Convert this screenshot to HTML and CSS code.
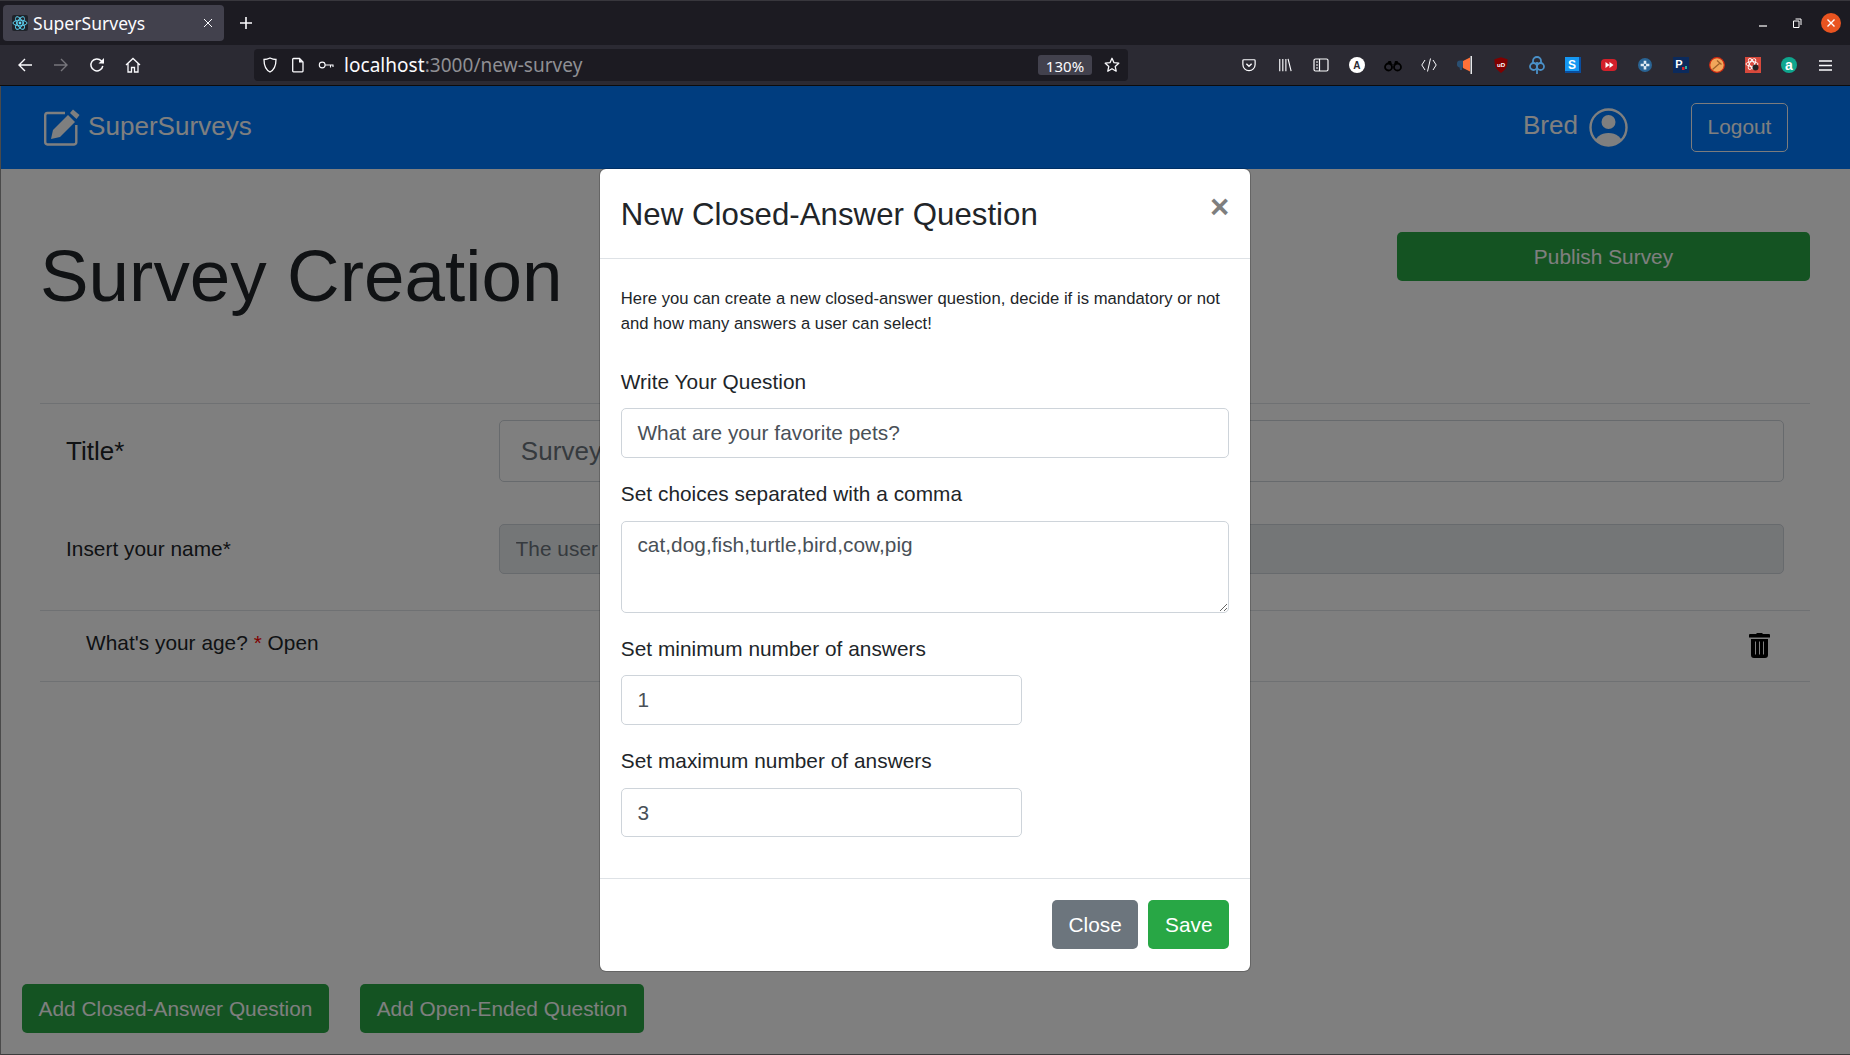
FILE: index.html
```html
<!DOCTYPE html>
<html lang="en">
<head>
    <meta charset="UTF-8">
    <meta name="viewport" content="width=device-width, initial-scale=1.0">
    <title>SuperSurveys</title>
    <link rel="stylesheet" href="styles.css">
</head>
<body>
    <!-- browser window chrome -->
    <div class="tabbar">
        <div class="tab">
            <svg class="favicon" viewBox="0 0 16 16"><rect width="16" height="16" rx="2" fill="#20232a"/><g fill="none" stroke="#61dafb" stroke-width=".9"><ellipse cx="8" cy="8" rx="7" ry="2.8"/><ellipse cx="8" cy="8" rx="7" ry="2.8" transform="rotate(60 8 8)"/><ellipse cx="8" cy="8" rx="7" ry="2.8" transform="rotate(120 8 8)"/></g><circle cx="8" cy="8" r="1.4" fill="#61dafb"/></svg>
            <span class="tab-title">SuperSurveys</span>
            <svg class="tab-close" viewBox="0 0 10 10"><path d="M1 1l8 8M9 1l-8 8" stroke="#fbfbfe" stroke-width="1"/></svg>
        </div>
        <svg class="new-tab" viewBox="0 0 14 14"><path d="M7 1v12M1 7h12" stroke="#fbfbfe" stroke-width="1.6"/></svg>
        <div class="window-controls">
            <span class="win-btn"><svg width="10" height="10" viewBox="0 0 10 10"><path d="M1 8h8" stroke="#fff" stroke-width="1.2"/></svg></span>
            <span class="win-btn"><svg width="10" height="10" viewBox="0 0 10 10"><path d="M1.5 3h5.5v6.5H1.5zM3.5 1h5.500v6" fill="none" stroke="#fff" stroke-width="1"/></svg></span>
            <span class="win-btn win-close"><svg width="10" height="10" viewBox="0 0 10 10"><path d="M1.5 1.5l7 7M8.5 1.5l-7 7" stroke="#fff" stroke-width="1.4"/></svg></span>
        </div>
    </div>
    <div class="toolbar">
        <span class="slot"><svg width="16" height="16" viewBox="0 0 16 16"><path d="M15 8H2M8 2L2 8l6 6" fill="none" stroke="#fbfbfe" stroke-width="1.4"/></svg></span>
        <span class="slot"><svg width="16" height="16" viewBox="0 0 16 16"><path d="M1 8h13M8 2l6 6-6 6" fill="none" stroke="#77767c" stroke-width="1.4"/></svg></span>
        <span class="slot"><svg width="16" height="16" viewBox="0 0 16 16"><path d="M13.8 9a6 6 0 1 1-1.5-5.200L14.500 6" fill="none" stroke="#fbfbfe" stroke-width="1.5"/><path d="M15 1v5.500H9.500z" fill="#fbfbfe"/></svg></span>
        <span class="slot"><svg width="16" height="16" viewBox="0 0 16 16"><path d="M1 8l7-6.500L15 8M3 6.500V15h3.500v-4.500h3V15H13V6.500" fill="none" stroke="#fbfbfe" stroke-width="1.3"/></svg></span>
        <div class="urlbar">
            <svg class="url-icon" width="16" height="16" viewBox="0 0 16 16"><path d="M8 1c2 1 4 1.500 6 1.500C14 9 12 13 8 15 4 13 2 9 2 2.500 4 2.500 6 2 8 1z" fill="none" stroke="#fbfbfe" stroke-width="1.3"/></svg>
            <svg class="url-icon" width="16" height="16" viewBox="0 0 16 16"><path d="M3.500 1.500H9.500L13 5v9a.8.8 0 0 1-.8.8H3.500a.8.8 0 0 1-.8-.8V2.300a.8.8 0 0 1 .8-.8z" fill="none" stroke="#fbfbfe" stroke-width="1.3"/><path d="M9 1.500V5.500h4z" fill="#fbfbfe"/></svg>
            <svg class="url-icon" width="16" height="16" viewBox="0 0 16 16"><circle cx="4.2" cy="8" r="2.9" fill="none" stroke="#fbfbfe" stroke-width="1.1"/><path d="M7 8h8.500M12.500 8v2.500M15 8v2" fill="none" stroke="#fbfbfe" stroke-width="1.1"/></svg>
            <span class="url-text"><span class="url-host">localhost</span>:3000/new-survey</span>
            <span class="zoom-pill">130%</span>
            <svg width="16" height="16" viewBox="0 0 16 16"><path d="M8 1.300l2 4.400 4.800.5-3.600 3.200 1 4.800L8 11.700l-4.200 2.500 1-4.800L1.200 6.200 6 5.700z" fill="none" stroke="#fbfbfe" stroke-width="1.3" stroke-linejoin="round"/></svg>
        </div>
        <div class="extensions">
            <span class="slot"><svg width="14" height="14" viewBox="0 0 16 16"><path d="M2 2h12a1 1 0 0 1 1 1v4.500a7 7 0 0 1-14 0V3a1 1 0 0 1 1-1z" fill="none" stroke="#fbfbfe" stroke-width="1.4"/><path d="M5 6.500L8 9.500l3-3" fill="none" stroke="#fbfbfe" stroke-width="1.6"/></svg></span>
            <span class="slot"><svg width="14" height="14" viewBox="0 0 16 16"><path d="M2 1v14M5.500 1v14M9 1v14M11.500 1l3.500 14" fill="none" stroke="#fbfbfe" stroke-width="1.3"/></svg></span>
            <span class="slot"><svg width="16" height="16" viewBox="0 0 16 16"><rect x="1" y="2" width="14" height="12" rx="1.5" fill="none" stroke="#fbfbfe" stroke-width="1.2"/><path d="M6.500 2v12M3 5h2M3 8h2M3 11h2" fill="none" stroke="#fbfbfe" stroke-width="1.2"/></svg></span>
            <span class="slot"><svg width="16" height="16" viewBox="0 0 16 16"><circle cx="8" cy="8" r="8" fill="#fff"/><text class="ext-letter" x="8" y="11.500" text-anchor="middle" fill="#2b2a33" font-size="10">A</text></svg></span>
            <span class="slot"><svg width="18" height="16" viewBox="0 0 18 16"><circle cx="4.500" cy="10" r="3.500" fill="none" stroke="#000" stroke-width="1.8"/><circle cx="13.500" cy="10" r="3.500" fill="none" stroke="#000" stroke-width="1.8"/><path d="M3 7l1.500-3h2.500l1 3.500h2l1-3.500h2.500L15 7" fill="#000"/></svg></span>
            <span class="slot"><svg width="16" height="16" viewBox="0 0 16 16"><path d="M4 3L.8 8 4 13M12 3l3.200 5L12 13M9.500 1.500l-3 13" fill="none" stroke="#fbfbfe" stroke-width="1"/></svg></span>
            <span class="slot"><svg width="16" height="18" viewBox="0 0 16 18"><path d="M0 7.500a3 3 0 0 1 3-3h3v7H3a3 3 0 0 1-3-3.500zM2.500 11h2.500v3H3z" fill="#2a4f72"/><path d="M6 5l7-3.500v14L6 12z" fill="#ff7139"/><path d="M13.500 0h1.500v18h-1.500z" fill="#e8e8ea"/></svg></span>
            <span class="slot"><svg width="14" height="16" viewBox="0 0 16 18"><path d="M8 0l7.500 2.500c0 7-1.500 12-7.500 15.500C2 14.500.500 9.500.500 2.500z" fill="#800000"/><text class="ext-letter" x="8" y="11" text-anchor="middle" fill="#fff" font-size="7">uD</text></svg></span>
            <span class="slot"><svg width="16" height="18" viewBox="0 0 16 18"><path d="M4 7V5a4 4 0 0 1 8 0v2" fill="none" stroke="#4a90c8" stroke-width="1.8"/><circle cx="4.500" cy="10.500" r="3.500" fill="none" stroke="#4a90c8" stroke-width="1.8"/><circle cx="11.500" cy="10.500" r="3.500" fill="none" stroke="#4a90c8" stroke-width="1.8"/><path d="M8 6v12" stroke="#4a90c8" stroke-width="1.8"/></svg></span>
            <span class="slot"><svg width="16" height="16" viewBox="0 0 16 16"><rect width="16" height="16" fill="#0a4d9e"/><rect width="14" height="14" fill="#1597f2"/><text class="ext-letter" x="7" y="11.500" text-anchor="middle" fill="#fff" font-size="12">S</text></svg></span>
            <span class="slot"><svg width="16" height="12" viewBox="0 0 16 12"><rect width="16" height="12" rx="4" fill="#d3202a"/><path d="M4.500 3l4 3-4 3zM8.500 3l4 3-4 3z" fill="#fff"/></svg></span>
            <span class="slot"><svg width="14" height="14" viewBox="0 0 16 16"><circle cx="8" cy="8" r="8" fill="#2a6494"/><path d="M6.500 3h3v3.500H13v3H9.500V13h-3V9.500H3v-3h3.500z" fill="#dfeaf2"/><circle cx="8" cy="8" r="1.3" fill="#2a6494"/></svg></span>
            <span class="slot"><svg width="16" height="16" viewBox="0 0 16 16"><rect width="16" height="16" fill="#0b2a5c"/><text class="ext-letter" x="6" y="11" text-anchor="middle" fill="#fff" font-size="11">P</text><path d="M9 10h2.500v3H9z" fill="#d8202a"/><path d="M12 9h2v3h-2z" fill="#2fb0a0"/></svg></span>
            <span class="slot"><svg width="16" height="16" viewBox="0 0 16 16"><circle cx="8" cy="8" r="7.300" fill="#f2a65a" stroke="#d62a10" stroke-width="1.2"/><path d="M3.500 12.500l7-6M8 3.500l4.500 4" fill="none" stroke="#a0622a" stroke-width="1.3"/></svg></span>
            <span class="slot"><svg width="16" height="16" viewBox="0 0 16 16"><rect width="16" height="16" fill="#d8493c"/><g fill="none" stroke="#fff" stroke-width=".9"><ellipse cx="7" cy="7" rx="6" ry="2.4"/><ellipse cx="7" cy="7" rx="6" ry="2.4" transform="rotate(60 7 7)"/><ellipse cx="7" cy="7" rx="6" ry="2.4" transform="rotate(120 7 7)"/></g><circle cx="10.500" cy="10.500" r="3" fill="#222"/></svg></span>
            <span class="slot"><svg width="16" height="16" viewBox="0 0 16 16"><circle cx="8" cy="8" r="8" fill="#0fa68e"/><text class="ext-letter" x="8" y="12.500" text-anchor="middle" fill="#fff" font-size="14">a</text></svg></span>
            <span class="slot"><svg width="13" height="11" viewBox="0 0 13 11"><path d="M0 1h13M0 5.500h13M0 10h13" stroke="#fbfbfe" stroke-width="1.3"/></svg></span>
        </div>
    </div>

    <div class="viewport">
        <nav class="navbar">
            <a class="brand">
                <svg class="brand-icon" width="36" height="37" viewBox="0 0 36 37"><path d="M21 4H3.500A2.500 2.500 0 0 0 1.200 6.500V33a2.500 2.500 0 0 0 2.300 2.500H30a2.500 2.500 0 0 0 2.300-2.500V16" fill="none" stroke="#fff" stroke-width="2.4"/><path d="M7 30l2-9L24 6l7 7-15 15z" fill="#fff"/><path d="M26 4l3-3.500 6.500 5.500-3 4z" fill="#fff"/></svg>
                <span class="brand-name">SuperSurveys</span>
            </a>
            <div class="nav-user">
                <span class="user-name">Bred</span>
                <svg class="user-icon" width="39" height="39" viewBox="0 0 39 39"><defs><clipPath id="avatar"><circle cx="19.500" cy="19.500" r="18"/></clipPath></defs><circle cx="19.500" cy="19.500" r="18" fill="none" stroke="#fff" stroke-width="2.4"/><circle cx="19.500" cy="14" r="7" fill="#fff"/><ellipse cx="19.500" cy="36" rx="14" ry="11" fill="#fff" clip-path="url(#avatar)"/></svg>
                <button class="btn btn-logout">Logout</button>
            </div>
        </nav>

        <main class="page">
            <div class="content">
                <header class="survey-head">
                    <h1 class="survey-title">Survey Creation</h1>
                    <button class="btn btn-success btn-publish">Publish Survey</button>
                </header>
                <section class="survey-fields">
                    <div class="field-row field-row-title">
                        <label class="field-label-lg">Title*</label>
                        <input class="input input-lg" type="text" placeholder="Survey title">
                    </div>
                    <div class="field-row">
                        <label>Insert your name*</label>
                        <input class="input" type="text" placeholder="The user will insert the name" disabled>
                    </div>
                </section>
                <div class="question-row">
                    <span>What's your age? <span class="required">*</span> Open</span>
                    <svg class="trash" width="21" height="26" viewBox="0 0 21 26"><path d="M7.500 2V1h6v1H20a1 1 0 0 1 1 1v2.500H0V3a1 1 0 0 1 1-1z" fill="#000"/><path fill-rule="evenodd" d="M2 7h17v16a3 3 0 0 1-3 3H5a3 3 0 0 1-3-3zM6 9.500v13h1v-13zM10 9.500v13h1v-13zM14 9.500v13h1v-13z" fill="#000"/></svg>
                </div>
            </div>
            <div class="page-actions">
                <button class="btn btn-success">Add Closed-Answer Question</button>
                <button class="btn btn-success">Add Open-Ended Question</button>
            </div>
        </main>

        <div class="backdrop"></div>

        <div class="modal">
            <div class="modal-header">
                <h5 class="modal-title">New Closed-Answer Question</h5>
                <span class="modal-close">×</span>
            </div>
            <div class="modal-body">
                <p class="modal-intro">Here you can create a new closed-answer question, decide if is mandatory or not and how many answers a user can select!</p>
                <div class="form-group">
                    <label>Write Your Question</label>
                    <input class="input" type="text" value="What are your favorite pets?">
                </div>
                <div class="form-group">
                    <label>Set choices separated with a comma</label>
                    <textarea class="input input-area">cat,dog,fish,turtle,bird,cow,pig</textarea>
                </div>
                <div class="form-group">
                    <label>Set minimum number of answers</label>
                    <input class="input input-short" type="number" value="1">
                </div>
                <div class="form-group">
                    <label>Set maximum number of answers</label>
                    <input class="input input-short" type="number" value="3">
                </div>
            </div>
            <div class="modal-footer">
                <button class="btn btn-secondary">Close</button>
                <button class="btn btn-success">Save</button>
            </div>
        </div>
    </div>
</body>
</html>
```

FILE: styles.css
```css
* {
    box-sizing: border-box;
}
html, body {
    height: 100%;
}
body {
    margin: 0;
    display: flex;
    flex-direction: column;
    overflow: hidden;
    font-family: "Liberation Sans", Arial, sans-serif;
    font-size: 20.8px;
    line-height: 1.5;
    letter-spacing: .04px;
    color: #212529;
    background-color: #fff;
}

/* browser chrome */
.tabbar {
    height: 45px;
    flex: none;
    display: flex;
    align-items: center;
    background-color: #1c1b22;
    border-top: 1px solid #38373d;
}
.tab {
    width: 221px;
    height: 36px;
    margin-left: 3px;
    padding: 0 11px 0 9px;
    display: flex;
    align-items: center;
    border-radius: 4px;
    background-color: #42414d;
}
.favicon {
    width: 16px;
    height: 16px;
}
.tab-title {
    margin: 1px 0 0 5px;
    font-family: "Noto Sans", sans-serif;
    font-size: 17.5px;
    color: #fbfbfe;
}
.tab-close {
    width: 10px;
    height: 10px;
    margin-left: auto;
}
.new-tab {
    width: 14px;
    height: 14px;
    margin-left: 15px;
}
.window-controls {
    margin-left: auto;
    padding-right: 2px;
    display: flex;
}
.win-btn {
    width: 34px;
    height: 20px;
    display: flex;
    align-items: center;
    justify-content: center;
}
.win-close {
    width: 20px;
    margin: 0 7px;
    border-radius: 50%;
    background-color: #e95420;
}
.toolbar {
    height: 41px;
    flex: none;
    padding-left: 7px;
    display: flex;
    align-items: center;
    background-color: #2b2a33;
    border-bottom: 1px solid #0c0c0d;
}
.slot {
    width: 36px;
    height: 24px;
    flex: none;
    display: flex;
    align-items: center;
    justify-content: center;
}
.urlbar {
    width: 874px;
    height: 32px;
    margin-left: 103px;
    padding: 0 8px;
    display: flex;
    align-items: center;
    border-radius: 4px;
    background-color: #1c1b22;
}
.url-icon {
    margin-right: 12px;
}
.url-text {
    margin: 1px 0 0 -2px;
    font-family: "Noto Sans", sans-serif;
    font-size: 19px;
    color: #8f8f94;
}
.url-host {
    color: #fbfbfe;
}
.zoom-pill {
    width: 54px;
    height: 20px;
    margin-left: auto;
    margin-right: 12px;
    text-align: center;
    font-family: "Noto Sans", sans-serif;
    font-size: 15px;
    line-height: 23px;
    color: #fbfbfe;
    border-radius: 3px;
    background-color: #42414d;
}
.extensions {
    margin-left: 103px;
    display: flex;
}
.ext-letter {
    font-family: "Liberation Sans", sans-serif;
    font-weight: bold;
}

/* page */
.viewport {
    flex: 1;
    position: relative;
    display: flex;
    flex-direction: column;
    min-height: 0;
}
.navbar {
    height: 83px;
    flex: none;
    padding: 0 62px 0 44px;
    display: flex;
    align-items: center;
    justify-content: space-between;
    background-color: #007bff;
    color: #fff;
}
.brand {
    display: flex;
    align-items: center;
    font-size: 26px;
}
.brand-icon {
    margin-right: 8px;
}
.brand-name {
    margin-top: -2px;
}
.nav-user {
    display: flex;
    align-items: center;
}
.user-name {
    font-size: 26px;
    margin-top: -4px;
}
.user-icon {
    margin: 0 63px 0 11px;
}
.btn {
    height: 49px;
    padding: 0 15.6px;
    font-family: inherit;
    font-size: 20.8px;
    letter-spacing: inherit;
    color: #fff;
    border: 1px solid transparent;
    border-radius: 5px;
}
.btn-logout {
    width: 97px;
    padding-bottom: 2px;
    background: transparent;
    border-color: #f8f9fa;
}
.btn-success {
    background-color: #28a745;
}
.btn-secondary {
    background-color: #6c757d;
}
.btn-publish {
    width: 413px;
    margin-top: 63px;
}
.page {
    flex: 1;
    display: flex;
    flex-direction: column;
}
.content {
    margin: 0 40px;
}
.survey-head {
    height: 235px;
    display: flex;
    justify-content: space-between;
    align-items: flex-start;
    border-bottom: 1px solid #dee2e6;
}
.survey-title {
    margin: 63px 0 0;
    font-size: 72.8px;
    font-weight: 400;
    line-height: 1.2;
}
.survey-fields {
    padding-bottom: 36px;
    border-bottom: 1px solid #dee2e6;
}
.field-row {
    margin-top: 42px;
    padding: 0 26px;
    display: flex;
    align-items: center;
}
.field-row-title {
    margin-top: 16px;
}
.field-row label {
    width: 433px;
    flex: none;
}
.field-row .field-label-lg {
    font-size: 26px;
}
.input {
    display: block;
    width: 100%;
    height: 50px;
    padding: 0 15.6px;
    font-family: inherit;
    font-size: 20.8px;
    letter-spacing: inherit;
    color: #495057;
    background-color: #fff;
    border: 1px solid #ced4da;
    border-radius: 5px;
    appearance: textfield;
}
.input::placeholder {
    color: #6c757d;
}
.input:disabled {
    background-color: #e9ecef;
}
.input-lg {
    height: 62px;
    padding: 0 20.8px;
    font-size: 26px;
}
.input-area {
    height: 92px;
    padding: 7.8px 15.6px;
    line-height: 1.5;
    appearance: auto;
}
.input-short {
    width: 401px;
}
.question-row {
    height: 71px;
    padding: 0 40px 7px 46px;
    display: flex;
    align-items: center;
    justify-content: space-between;
    border-bottom: 1px solid #dee2e6;
}
.required {
    color: #f00;
}
.trash {
    margin-top: 4px;
}
.page-actions {
    margin-top: auto;
    padding: 0 0 22px 22px;
    display: flex;
    gap: 31px;
}

/* modal */
.backdrop {
    position: absolute;
    inset: 0;
    background-color: rgba(0, 0, 0, .5);
    border-left: 1px solid #4a4a4a;
    border-bottom: 1px solid #3c3c3c;
}
.modal {
    position: absolute;
    top: 82px;
    left: 599px;
    width: 652px;
    height: 804px;
    display: flex;
    flex-direction: column;
    background-color: #fff;
    border: 1px solid rgba(0, 0, 0, .2);
    background-clip: padding-box;
    border-radius: 7px;
}
.modal-header {
    padding: 22.8px 20.8px 19.8px;
    display: flex;
    align-items: flex-start;
    justify-content: space-between;
    border-bottom: 1px solid #dee2e6;
}
.modal-title {
    margin: 0;
    font-size: 31.2px;
    font-weight: 400;
    line-height: 1.5;
}
.modal-close {
    margin-top: -10px;
    font-size: 33px;
    font-weight: 700;
    line-height: 1.5;
    color: #000;
    opacity: .5;
}
.modal-body {
    flex: 1;
    padding: 20.8px 20.8px 0;
}
.modal-intro {
    margin: 6px 0 30px;
    font-size: 16.64px;
    line-height: 25px;
}
.form-group {
    margin-bottom: 21.2px;
}
.form-group label {
    display: block;
    margin-bottom: 10.4px;
}
.form-group + .form-group label {
    margin-top: -1px;
    margin-bottom: 11.4px;
}
.form-group:last-child {
    margin-bottom: 0;
}
.form-group:last-child .input {
    height: 49px;
}
.modal-footer {
    padding: 20.8px 20.8px 21.8px;
    display: flex;
    justify-content: flex-end;
    gap: 10px;
    border-top: 1px solid #dee2e6;
}
```
